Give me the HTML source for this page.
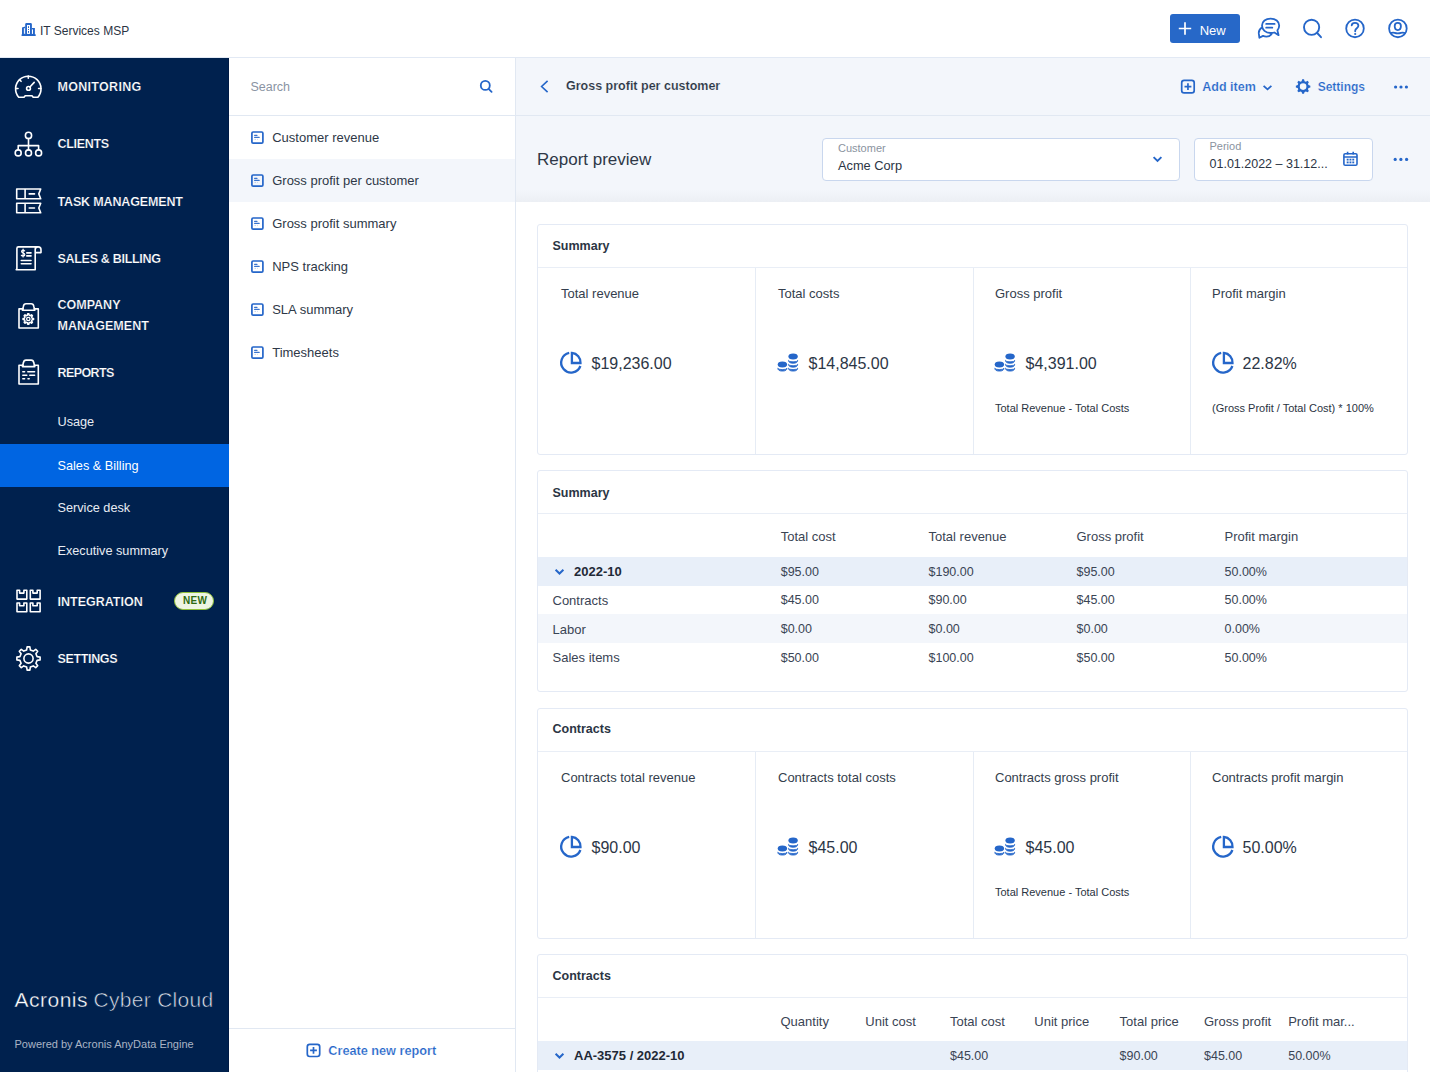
<!DOCTYPE html>
<html><head><meta charset="utf-8">
<style>
*{box-sizing:border-box;margin:0;padding:0}
html,body{width:1430px;height:1072px;overflow:hidden;background:#fff}
body{font-family:"Liberation Sans",sans-serif;color:#2c3646;position:relative}
.abs{position:absolute}
.t{position:absolute;line-height:1;white-space:nowrap}
svg.ov{position:absolute;left:0;top:0;width:1430px;height:1072px;pointer-events:none}
</style></head>
<body>
<div class="abs" style="left:0px;top:0px;width:1430px;height:57px;background:#fff"></div>
<div class="abs" style="left:0px;top:57px;width:1430px;height:1px;background:#e2e9f4"></div>
<div class="abs" style="left:0px;top:58px;width:229px;height:1014px;background:#00214e"></div>
<div class="abs" style="left:228px;top:58px;width:1px;height:1014px;background:#001a44"></div>
<div class="abs" style="left:0px;top:444px;width:229px;height:43px;background:#0065e2"></div>
<div class="abs" style="left:229px;top:58px;width:286px;height:1014px;background:#fff"></div>
<div class="abs" style="left:515px;top:58px;width:1px;height:1014px;background:#e1e8f2"></div>
<div class="abs" style="left:229px;top:115px;width:286px;height:1px;background:#e1e8f2"></div>
<div class="abs" style="left:229px;top:159px;width:286px;height:43px;background:#f3f6fb"></div>
<div class="abs" style="left:229px;top:1028px;width:286px;height:1px;background:#e1e8f2"></div>
<div class="abs" style="left:516px;top:58px;width:914px;height:57px;background:#f3f6fb"></div>
<div class="abs" style="left:516px;top:115px;width:914px;height:1px;background:#e1e8f2"></div>
<div class="abs" style="left:516px;top:116px;width:914px;height:86px;background:#f3f6fb"></div>
<div class="abs" style="left:516px;top:190px;width:914px;height:12px;background:linear-gradient(#f3f6fb,#eceff4)"></div>
<div class="abs" style="left:822px;top:138px;width:358px;height:43px;background:#fff;border:1px solid #c9d7ee;border-radius:4px"></div>
<div class="abs" style="left:1194px;top:138px;width:179px;height:43px;background:#fff;border:1px solid #c9d7ee;border-radius:4px"></div>
<div class="abs" style="left:537px;top:224px;width:871px;height:231px;background:#fff;border:1px solid #e4eaf5;border-radius:3px"></div>
<div class="abs" style="left:538px;top:267px;width:869px;height:1px;background:#e9eef6"></div>
<div class="abs" style="left:755px;top:268px;width:1px;height:186px;background:#e6ecf5"></div>
<div class="abs" style="left:973px;top:268px;width:1px;height:186px;background:#e6ecf5"></div>
<div class="abs" style="left:1190px;top:268px;width:1px;height:186px;background:#e6ecf5"></div>
<div class="abs" style="left:537px;top:470px;width:871px;height:222px;background:#fff;border:1px solid #e4eaf5;border-radius:3px"></div>
<div class="abs" style="left:538px;top:513px;width:869px;height:1px;background:#e9eef6"></div>
<div class="abs" style="left:538px;top:557px;width:869px;height:29px;background:#e8eff9"></div>
<div class="abs" style="left:538px;top:614px;width:869px;height:29px;background:#f3f6fb"></div>
<div class="abs" style="left:537px;top:708px;width:871px;height:231px;background:#fff;border:1px solid #e4eaf5;border-radius:3px"></div>
<div class="abs" style="left:538px;top:751px;width:869px;height:1px;background:#e9eef6"></div>
<div class="abs" style="left:755px;top:752px;width:1px;height:186px;background:#e6ecf5"></div>
<div class="abs" style="left:973px;top:752px;width:1px;height:186px;background:#e6ecf5"></div>
<div class="abs" style="left:1190px;top:752px;width:1px;height:186px;background:#e6ecf5"></div>
<div class="abs" style="left:537px;top:954px;width:871px;height:130px;background:#fff;border:1px solid #e4eaf5;border-radius:3px"></div>
<div class="abs" style="left:538px;top:997px;width:869px;height:1px;background:#e9eef6"></div>
<div class="abs" style="left:538px;top:1041px;width:869px;height:29px;background:#e8eff9"></div>
<div class="t" style="left:40.0px;top:24.6px;font-size:12px;font-weight:400;color:#2b3443;">IT Services MSP</div>
<div class="abs" style="left:1170px;top:14px;width:70px;height:29px;background:#2768c8;border-radius:3px"></div>
<div class="t" style="left:1199.7px;top:23.5px;font-size:13px;font-weight:400;color:#fff;">New</div>
<div class="t" style="left:57.5px;top:81.2px;font-size:12.5px;font-weight:700;color:#ffffff;letter-spacing:0.3px;-webkit-text-stroke:0.2px #00214e">MONITORING</div>
<div class="t" style="left:57.5px;top:137.8px;font-size:12.5px;font-weight:700;color:#ffffff;letter-spacing:-0.3px;-webkit-text-stroke:0.2px #00214e">CLIENTS</div>
<div class="t" style="left:57.5px;top:196.2px;font-size:12.5px;font-weight:700;color:#ffffff;letter-spacing:-0.15px;-webkit-text-stroke:0.2px #00214e">TASK MANAGEMENT</div>
<div class="t" style="left:57.5px;top:253.4px;font-size:12.5px;font-weight:700;color:#ffffff;letter-spacing:-0.3px;-webkit-text-stroke:0.2px #00214e">SALES &amp; BILLING</div>
<div class="t" style="left:57.5px;top:299.2px;font-size:12.5px;font-weight:700;color:#ffffff;letter-spacing:0px;-webkit-text-stroke:0.2px #00214e">COMPANY</div>
<div class="t" style="left:57.5px;top:319.8px;font-size:12.5px;font-weight:700;color:#ffffff;letter-spacing:0.05px;-webkit-text-stroke:0.2px #00214e">MANAGEMENT</div>
<div class="t" style="left:57.5px;top:366.9px;font-size:12.5px;font-weight:700;color:#ffffff;letter-spacing:-0.6px;-webkit-text-stroke:0.2px #00214e">REPORTS</div>
<div class="t" style="left:57.5px;top:415.8px;font-size:12.7px;font-weight:400;color:#e8ecf3;">Usage</div>
<div class="t" style="left:57.5px;top:459.5px;font-size:12.7px;font-weight:400;color:#fff;">Sales &amp; Billing</div>
<div class="t" style="left:57.5px;top:502.0px;font-size:12.7px;font-weight:400;color:#e8ecf3;">Service desk</div>
<div class="t" style="left:57.5px;top:545.0px;font-size:12.7px;font-weight:400;color:#e8ecf3;">Executive summary</div>
<div class="t" style="left:57.5px;top:595.9px;font-size:12.5px;font-weight:700;color:#ffffff;letter-spacing:0px;-webkit-text-stroke:0.2px #00214e">INTEGRATION</div>
<div class="t" style="left:57.5px;top:653.0px;font-size:12.5px;font-weight:700;color:#ffffff;letter-spacing:-0.35px;-webkit-text-stroke:0.2px #00214e">SETTINGS</div>
<div class="abs" style="left:174px;top:592px;width:40px;height:18px;background:#eef5e3;border:1.5px solid #8fbf3a;border-radius:9px"></div>
<div class="t" style="left:183.0px;top:596.3px;font-size:10px;font-weight:700;color:#2f6a12;letter-spacing:0.3px">NEW</div>
<div class="t" style="left:14.5px;top:989.1px;font-size:21px;font-weight:400;color:#ffffff;letter-spacing:0.5px;-webkit-text-stroke:0.35px #00214e">Acronis</div>
<div class="t" style="left:93.5px;top:989.1px;font-size:21px;font-weight:400;color:#dfe4ec;letter-spacing:0.3px;-webkit-text-stroke:0.6px #00214e">Cyber Cloud</div>
<div class="t" style="left:14.5px;top:1039.2px;font-size:11px;font-weight:400;color:#aab4c5;">Powered by Acronis AnyData Engine</div>
<div class="t" style="left:250.4px;top:81.1px;font-size:12.5px;font-weight:400;color:#8a94a3;">Search</div>
<div class="t" style="left:272.2px;top:130.6px;font-size:13px;font-weight:400;color:#2e3847;">Customer revenue</div>
<div class="t" style="left:272.2px;top:173.6px;font-size:13px;font-weight:400;color:#2e3847;">Gross profit per customer</div>
<div class="t" style="left:272.2px;top:216.6px;font-size:13px;font-weight:400;color:#2e3847;">Gross profit summary</div>
<div class="t" style="left:272.2px;top:259.6px;font-size:13px;font-weight:400;color:#2e3847;">NPS tracking</div>
<div class="t" style="left:272.2px;top:302.6px;font-size:13px;font-weight:400;color:#2e3847;">SLA summary</div>
<div class="t" style="left:272.2px;top:345.6px;font-size:13px;font-weight:400;color:#2e3847;">Timesheets</div>
<div class="t" style="left:328.3px;top:1045.4px;font-size:12.7px;font-weight:700;color:#2566c9;-webkit-text-stroke:0.2px #fff">Create new report</div>
<div class="t" style="left:566.0px;top:80.4px;font-size:12.5px;font-weight:700;color:#2b3544;-webkit-text-stroke:0.15px #f3f6fb">Gross profit per customer</div>
<div class="t" style="left:1202.3px;top:80.9px;font-size:12.5px;font-weight:700;color:#2566c9;-webkit-text-stroke:0.2px #f3f6fb">Add item</div>
<div class="t" style="left:1317.7px;top:80.8px;font-size:12px;font-weight:700;color:#2566c9;-webkit-text-stroke:0.2px #f3f6fb">Settings</div>
<div class="t" style="left:537.0px;top:150.8px;font-size:17px;font-weight:400;color:#2e3847;">Report preview</div>
<div class="t" style="left:838.0px;top:142.7px;font-size:11px;font-weight:400;color:#8a93a0;">Customer</div>
<div class="t" style="left:838.0px;top:160.2px;font-size:12.8px;font-weight:400;color:#2b3544;">Acme Corp</div>
<div class="t" style="left:1209.5px;top:140.7px;font-size:11px;font-weight:400;color:#8a93a0;">Period</div>
<div class="t" style="left:1209.5px;top:158.2px;font-size:12.5px;font-weight:400;color:#2b3544;">01.01.2022 – 31.12...</div>
<div class="t" style="left:552.5px;top:239.7px;font-size:12.5px;font-weight:700;color:#2b3544;">Summary</div>
<div class="t" style="left:561.0px;top:286.6px;font-size:13px;font-weight:400;color:#343e4d;">Total revenue</div>
<div class="t" style="left:591.5px;top:356.3px;font-size:16px;font-weight:400;color:#2c3646;">$19,236.00</div>
<div class="t" style="left:778.0px;top:286.6px;font-size:13px;font-weight:400;color:#343e4d;">Total costs</div>
<div class="t" style="left:808.5px;top:356.3px;font-size:16px;font-weight:400;color:#2c3646;">$14,845.00</div>
<div class="t" style="left:995.0px;top:286.6px;font-size:13px;font-weight:400;color:#343e4d;">Gross profit</div>
<div class="t" style="left:1025.5px;top:356.3px;font-size:16px;font-weight:400;color:#2c3646;">$4,391.00</div>
<div class="t" style="left:995.0px;top:402.5px;font-size:11px;font-weight:400;color:#2a3342;">Total Revenue - Total Costs</div>
<div class="t" style="left:1212.0px;top:286.6px;font-size:13px;font-weight:400;color:#343e4d;">Profit margin</div>
<div class="t" style="left:1242.5px;top:356.3px;font-size:16px;font-weight:400;color:#2c3646;">22.82%</div>
<div class="t" style="left:1212.0px;top:402.5px;font-size:11px;font-weight:400;color:#2a3342;">(Gross Profit / Total Cost) * 100%</div>
<div class="t" style="left:552.5px;top:486.6px;font-size:12.5px;font-weight:700;color:#2b3544;">Summary</div>
<div class="t" style="left:780.7px;top:529.6px;font-size:13px;font-weight:400;color:#3a4454;">Total cost</div>
<div class="t" style="left:928.5px;top:529.6px;font-size:13px;font-weight:400;color:#3a4454;">Total revenue</div>
<div class="t" style="left:1076.5px;top:529.6px;font-size:13px;font-weight:400;color:#3a4454;">Gross profit</div>
<div class="t" style="left:1224.5px;top:529.6px;font-size:13px;font-weight:400;color:#3a4454;">Profit margin</div>
<div class="t" style="left:574.0px;top:565.3px;font-size:13px;font-weight:700;color:#1f2937;">2022-10</div>
<div class="t" style="left:780.7px;top:565.7px;font-size:12.5px;font-weight:400;color:#3a4454;">$95.00</div>
<div class="t" style="left:928.5px;top:565.7px;font-size:12.5px;font-weight:400;color:#3a4454;">$190.00</div>
<div class="t" style="left:1076.5px;top:565.7px;font-size:12.5px;font-weight:400;color:#3a4454;">$95.00</div>
<div class="t" style="left:1224.5px;top:565.7px;font-size:12.5px;font-weight:400;color:#3a4454;">50.00%</div>
<div class="t" style="left:552.5px;top:594.0px;font-size:13px;font-weight:400;color:#3a4454;">Contracts</div>
<div class="t" style="left:780.7px;top:594.4px;font-size:12.5px;font-weight:400;color:#3a4454;">$45.00</div>
<div class="t" style="left:928.5px;top:594.4px;font-size:12.5px;font-weight:400;color:#3a4454;">$90.00</div>
<div class="t" style="left:1076.5px;top:594.4px;font-size:12.5px;font-weight:400;color:#3a4454;">$45.00</div>
<div class="t" style="left:1224.5px;top:594.4px;font-size:12.5px;font-weight:400;color:#3a4454;">50.00%</div>
<div class="t" style="left:552.5px;top:622.7px;font-size:13px;font-weight:400;color:#3a4454;">Labor</div>
<div class="t" style="left:780.7px;top:623.1px;font-size:12.5px;font-weight:400;color:#3a4454;">$0.00</div>
<div class="t" style="left:928.5px;top:623.1px;font-size:12.5px;font-weight:400;color:#3a4454;">$0.00</div>
<div class="t" style="left:1076.5px;top:623.1px;font-size:12.5px;font-weight:400;color:#3a4454;">$0.00</div>
<div class="t" style="left:1224.5px;top:623.1px;font-size:12.5px;font-weight:400;color:#3a4454;">0.00%</div>
<div class="t" style="left:552.5px;top:651.4px;font-size:13px;font-weight:400;color:#3a4454;">Sales items</div>
<div class="t" style="left:780.7px;top:651.8px;font-size:12.5px;font-weight:400;color:#3a4454;">$50.00</div>
<div class="t" style="left:928.5px;top:651.8px;font-size:12.5px;font-weight:400;color:#3a4454;">$100.00</div>
<div class="t" style="left:1076.5px;top:651.8px;font-size:12.5px;font-weight:400;color:#3a4454;">$50.00</div>
<div class="t" style="left:1224.5px;top:651.8px;font-size:12.5px;font-weight:400;color:#3a4454;">50.00%</div>
<div class="t" style="left:552.5px;top:723.4px;font-size:12.5px;font-weight:700;color:#2b3544;">Contracts</div>
<div class="t" style="left:561.0px;top:770.6px;font-size:13px;font-weight:400;color:#343e4d;">Contracts total revenue</div>
<div class="t" style="left:591.5px;top:840.3px;font-size:16px;font-weight:400;color:#2c3646;">$90.00</div>
<div class="t" style="left:778.0px;top:770.6px;font-size:13px;font-weight:400;color:#343e4d;">Contracts total costs</div>
<div class="t" style="left:808.5px;top:840.3px;font-size:16px;font-weight:400;color:#2c3646;">$45.00</div>
<div class="t" style="left:995.0px;top:770.6px;font-size:13px;font-weight:400;color:#343e4d;">Contracts gross profit</div>
<div class="t" style="left:1025.5px;top:840.3px;font-size:16px;font-weight:400;color:#2c3646;">$45.00</div>
<div class="t" style="left:995.0px;top:886.5px;font-size:11px;font-weight:400;color:#2a3342;">Total Revenue - Total Costs</div>
<div class="t" style="left:1212.0px;top:770.6px;font-size:13px;font-weight:400;color:#343e4d;">Contracts profit margin</div>
<div class="t" style="left:1242.5px;top:840.3px;font-size:16px;font-weight:400;color:#2c3646;">50.00%</div>
<div class="t" style="left:552.5px;top:969.7px;font-size:12.5px;font-weight:700;color:#2b3544;">Contracts</div>
<div class="t" style="left:780.5px;top:1014.5px;font-size:13px;font-weight:400;color:#3a4454;">Quantity</div>
<div class="t" style="left:865.3px;top:1014.5px;font-size:13px;font-weight:400;color:#3a4454;">Unit cost</div>
<div class="t" style="left:950.0px;top:1014.5px;font-size:13px;font-weight:400;color:#3a4454;">Total cost</div>
<div class="t" style="left:1034.3px;top:1014.5px;font-size:13px;font-weight:400;color:#3a4454;">Unit price</div>
<div class="t" style="left:1119.6px;top:1014.5px;font-size:13px;font-weight:400;color:#3a4454;">Total price</div>
<div class="t" style="left:1204.0px;top:1014.5px;font-size:13px;font-weight:400;color:#3a4454;">Gross profit</div>
<div class="t" style="left:1288.2px;top:1014.5px;font-size:13px;font-weight:400;color:#3a4454;">Profit mar...</div>
<div class="t" style="left:574.0px;top:1049.3px;font-size:13px;font-weight:700;color:#1f2937;">AA-3575 / 2022-10</div>
<div class="t" style="left:950.0px;top:1049.7px;font-size:12.5px;font-weight:400;color:#3a4454;">$45.00</div>
<div class="t" style="left:1119.6px;top:1049.7px;font-size:12.5px;font-weight:400;color:#3a4454;">$90.00</div>
<div class="t" style="left:1204.0px;top:1049.7px;font-size:12.5px;font-weight:400;color:#3a4454;">$45.00</div>
<div class="t" style="left:1288.2px;top:1049.7px;font-size:12.5px;font-weight:400;color:#3a4454;">50.00%</div>
<svg class="ov" viewBox="0 0 1430 1072"><g fill="#2566c9"><path d="M22 27.6 L25.3 26.6 V35 H22 Z"/><path d="M25.2 24.4 Q25.2 23.1 26.5 23.1 H30.6 Q31.9 23.1 31.9 24.4 V35 H25.2 Z"/><path d="M31.8 28 H34.9 V35 H31.8 Z"/><rect x="21.4" y="34.2" width="14.5" height="1.8" rx="0.8"/></g><g fill="#fff"><rect x="23.9" y="28.2" width="1.0" height="5.6"/><rect x="27" y="25" width="3" height="8.9"/><rect x="32.0" y="29.4" width="1.0" height="4.5"/></g><g fill="#2566c9"><rect x="28" y="26.2" width="1" height="1.8"/><rect x="28" y="29" width="1" height="1"/><rect x="28" y="31" width="1" height="1.8"/></g><path d="M1185 22.2 V34.8 M1178.8 28.5 H1191.2" stroke="#fff" stroke-width="1.7" fill="none"/><g fill="none" stroke="#2566c9" stroke-width="1.8" stroke-linejoin="round" stroke-linecap="round"><path d="M1274.4 32.5 Q1272.6 33 1270.6 33 C1265.6 33 1262 29.6 1262 25.6 C1262 21.4 1265.7 18.6 1270.6 18.6 C1275.5 18.6 1279.2 21.4 1279.2 25.6 C1279.2 27.4 1278.6 29 1277.4 30.4 L1278.6 35.2 Z"/><path d="M1261.9 27.6 C1259.8 29 1258.6 31 1258.8 33.4 L1259.4 37.8 L1263 35.9 Q1264.5 36.6 1266.5 36.6 C1268.8 36.6 1270.4 35.6 1271.6 34"/><path d="M1266.2 23.9 H1274.6 M1266.2 27.7 H1272.3"/></g><g fill="none" stroke="#2566c9" stroke-width="1.9" stroke-linecap="round"><circle cx="1311.6" cy="27.3" r="7.6"/><path d="M1317.2 33 L1321 37.2"/></g><g fill="none" stroke="#2566c9" stroke-width="1.8" stroke-linecap="round"><circle cx="1355" cy="28.45" r="8.8"/><path d="M1351.7 25.3 C1351.9 23.6 1353.3 22.9 1355 22.9 C1357 22.9 1358.4 24.1 1358.4 25.8 C1358.4 28.2 1355.2 28.3 1355.2 30.8 V31.3"/></g><circle cx="1355.2" cy="34" r="1.1" fill="#2566c9"/><g fill="none" stroke="#2566c9" stroke-width="1.8"><circle cx="1397.9" cy="28.45" r="8.8"/><path d="M1397.8 22.9 C1399.9 22.9 1400.9 24.3 1400.9 26.1 C1400.9 28.5 1399.6 30.1 1397.8 30.1 C1396 30.1 1394.7 28.5 1394.7 26.1 C1394.7 24.3 1395.7 22.9 1397.8 22.9 Z"/><path d="M1389.9 33.3 C1391.6 32.6 1393 32.4 1394.6 32.8 C1396.6 33.4 1399 33.4 1401 32.8 C1402.6 32.4 1404 32.6 1405.8 33.3"/></g><g fill="none" stroke="#fff" stroke-width="1.6" stroke-linejoin="round" stroke-linecap="round"><path d="M18.7 97.2 H24 L25.2 95.7 H32 L33.2 97.2 H37.9 A12.7 12.7 0 1 0 18.7 97.2 Z"/><path d="M28.3 76 V78.3 M19.5 79.7 L21.1 81.3 M15.8 88.5 H18 M40.8 88.5 H38.6"/><circle cx="28.5" cy="88.4" r="1.9"/><path d="M29.9 87 L34.2 82.4"/></g><g fill="none" stroke="#fff" stroke-width="1.6" stroke-linejoin="round" stroke-linecap="round"><circle cx="28.5" cy="135.4" r="3.1"/><path d="M28.5 138.5 V145.6 M18.2 149.8 V145.6 H38.6 V149.8 M28.5 145.6 V149.8"/><circle cx="18.2" cy="152.9" r="3.0"/><circle cx="28.5" cy="152.9" r="3.0"/><circle cx="38.6" cy="152.9" r="3.0"/></g><g fill="none" stroke="#fff" stroke-width="1.6" stroke-linejoin="round" stroke-linecap="round"><path d="M16.7 189 H40.7 L38.8 193.9 L40.7 198.7 H16.7 Z M25.1 189 V198.7 M29.2 193.9 H34.5"/><path d="M16.7 203.3 H40.7 L38.8 208 L40.7 212.8 H16.7 Z M25.1 203.3 V212.8 M29.2 208 H34.5"/></g><g fill="none" stroke="#fff" stroke-width="1.6" stroke-linejoin="round" stroke-linecap="round"><path d="M35.2 252.6 V269.8 H16.2 L16.9 268.6 V248.4 Q16.9 246.9 18.4 246.9 H38.2 Q41 246.9 41 249.8 V252.6 H35.2 V249.4 Q35.2 246.9 38 246.9"/><path d="M26.8 252.9 H31 M26.8 255.9 H31 M21.3 260.5 H31 M21.3 263.8 H31"/><path d="M24.6 250.8 Q24 250.2 23.1 250.2 Q21.6 250.2 21.6 251.5 Q21.6 252.6 23.1 253 Q24.8 253.4 24.8 254.7 Q24.8 256 23.1 256 Q22 256 21.4 255.3 M23.1 249.2 V257" stroke-width="1.2"/></g><g fill="none" stroke="#fff" stroke-width="1.6" stroke-linejoin="round" stroke-linecap="round"><path d="M23.2 308.9 H19 V328 H38.3 V308.9 H34.2"/><path d="M22.4 310.2 L23.4 306.4 Q23.8 303.8 26 303.8 H31.2 Q33.4 303.8 33.8 306.4 L34.8 310.2 Z"/><path d="M32.11 318.18 L33.56 318.38 L33.56 319.62 L32.11 319.82 L31.58 321.12 L32.46 322.28 L31.58 323.16 L30.42 322.28 L29.12 322.81 L28.92 324.26 L27.68 324.26 L27.48 322.81 L26.18 322.28 L25.02 323.16 L24.14 322.28 L25.02 321.12 L24.49 319.82 L23.04 319.62 L23.04 318.38 L24.49 318.18 L25.02 316.88 L24.14 315.72 L25.02 314.84 L26.18 315.72 L27.48 315.19 L27.68 313.74 L28.92 313.74 L29.12 315.19 L30.42 315.72 L31.58 314.84 L32.46 315.72 L31.58 316.88 Z" stroke-width="1.5"/><circle cx="28.3" cy="319" r="1.7" stroke-width="1.3"/></g><g fill="none" stroke="#fff" stroke-width="1.6" stroke-linejoin="round" stroke-linecap="round"><path d="M23.2 365.3 H19 V384 H38.3 V365.3 H34.2"/><path d="M22.4 366.6 L23.4 362.8 Q23.8 360.1 26 360.1 H31.2 Q33.4 360.1 33.8 362.8 L34.8 366.6 Z"/><path d="M22.8 371.7 H24.6 M27.8 371.7 H34.6 M22.8 375.2 H26.8 M29.8 375.2 H34.6 M22.8 378.8 H24.6 M28 378.8 H29.2" stroke-width="1.5"/></g><g fill="none" stroke="#fff" stroke-width="1.6" stroke-linejoin="round" stroke-linecap="round" stroke-width="1.5" stroke-linejoin="miter"><path d="M17 590.3 H19.6 V593.0999999999999 H23.9 V590.3 H26.8 V599.0999999999999 H17 Z M30.3 590.3 H32.9 V593.0999999999999 H37.2 V590.3 H40.1 V599.0999999999999 H30.3 Z M17 603 H19.6 V605.8 H23.9 V603 H26.8 V611.8 H17 Z M30.3 603 H32.9 V605.8 H37.2 V603 H40.1 V611.8 H30.3 Z"/></g><g fill="none" stroke="#fff" stroke-width="1.6" stroke-linejoin="round" stroke-linecap="round"><path d="M26.65 649.90 L27.12 646.88 L29.88 646.88 L30.35 649.90 L33.27 651.11 L35.74 649.31 L37.69 651.26 L35.89 653.73 L37.10 656.65 L40.12 657.12 L40.12 659.88 L37.10 660.35 L35.89 663.27 L37.69 665.74 L35.74 667.69 L33.27 665.89 L30.35 667.10 L29.88 670.12 L27.12 670.12 L26.65 667.10 L23.73 665.89 L21.26 667.69 L19.31 665.74 L21.11 663.27 L19.90 660.35 L16.88 659.88 L16.88 657.12 L19.90 656.65 L21.11 653.73 L19.31 651.26 L21.26 649.31 L23.73 651.11 Z"/><circle cx="28.5" cy="658.5" r="4.6"/></g><g fill="none" stroke="#2566c9" stroke-width="1.7"><rect x="251.9" y="132" width="11" height="11.1" rx="1.2"/></g><g stroke="#2566c9" stroke-width="1.1" stroke-linecap="round" opacity="0.9"><path d="M254.6 135.4 H257 M254.6 137.4 H259.2"/></g><g stroke="#2566c9" stroke-width="1" opacity="0.35"><path d="M254.6 139.4 H255.8 M257.4 139.4 H258"/></g><g fill="none" stroke="#2566c9" stroke-width="1.7"><rect x="251.9" y="175" width="11" height="11.1" rx="1.2"/></g><g stroke="#2566c9" stroke-width="1.1" stroke-linecap="round" opacity="0.9"><path d="M254.6 178.4 H257 M254.6 180.4 H259.2"/></g><g stroke="#2566c9" stroke-width="1" opacity="0.35"><path d="M254.6 182.4 H255.8 M257.4 182.4 H258"/></g><g fill="none" stroke="#2566c9" stroke-width="1.7"><rect x="251.9" y="218" width="11" height="11.1" rx="1.2"/></g><g stroke="#2566c9" stroke-width="1.1" stroke-linecap="round" opacity="0.9"><path d="M254.6 221.4 H257 M254.6 223.4 H259.2"/></g><g stroke="#2566c9" stroke-width="1" opacity="0.35"><path d="M254.6 225.4 H255.8 M257.4 225.4 H258"/></g><g fill="none" stroke="#2566c9" stroke-width="1.7"><rect x="251.9" y="261" width="11" height="11.1" rx="1.2"/></g><g stroke="#2566c9" stroke-width="1.1" stroke-linecap="round" opacity="0.9"><path d="M254.6 264.4 H257 M254.6 266.4 H259.2"/></g><g stroke="#2566c9" stroke-width="1" opacity="0.35"><path d="M254.6 268.4 H255.8 M257.4 268.4 H258"/></g><g fill="none" stroke="#2566c9" stroke-width="1.7"><rect x="251.9" y="304" width="11" height="11.1" rx="1.2"/></g><g stroke="#2566c9" stroke-width="1.1" stroke-linecap="round" opacity="0.9"><path d="M254.6 307.4 H257 M254.6 309.4 H259.2"/></g><g stroke="#2566c9" stroke-width="1" opacity="0.35"><path d="M254.6 311.4 H255.8 M257.4 311.4 H258"/></g><g fill="none" stroke="#2566c9" stroke-width="1.7"><rect x="251.9" y="347" width="11" height="11.1" rx="1.2"/></g><g stroke="#2566c9" stroke-width="1.1" stroke-linecap="round" opacity="0.9"><path d="M254.6 350.4 H257 M254.6 352.4 H259.2"/></g><g stroke="#2566c9" stroke-width="1" opacity="0.35"><path d="M254.6 354.4 H255.8 M257.4 354.4 H258"/></g><g fill="none" stroke="#2566c9" stroke-width="1.8" stroke-linecap="round"><circle cx="485.3" cy="85.4" r="4.5"/><path d="M488.6 88.8 L491.6 91.8"/></g><g fill="none" stroke="#2566c9" stroke-width="1.7"><rect x="307.3" y="1044.3" width="12.4" height="12.2" rx="2.4"/><path d="M313.5 1047 V1053.8 M310.1 1050.4 H316.9"/></g><path d="M547.6 80.8 L541.6 86.5 L547.6 92.2" fill="none" stroke="#2566c9" stroke-width="1.6"/><g fill="none" stroke="#2566c9" stroke-width="1.7"><rect x="1181.7" y="80.4" width="12.5" height="12.4" rx="2.4"/><path d="M1187.95 83.2 V90 M1184.5 86.6 H1191.4"/></g><path d="M1263.6 85.8 L1267.5 89.3 L1271.4 85.8" fill="none" stroke="#2566c9" stroke-width="1.8"/><path fill="#2566c9" fill-rule="evenodd" d="M1301.62 81.20 L1302.19 79.36 L1304.01 79.36 L1304.58 81.20 L1305.87 81.74 L1307.57 80.83 L1308.87 82.13 L1307.96 83.83 L1308.50 85.12 L1310.34 85.69 L1310.34 87.51 L1308.50 88.08 L1307.96 89.37 L1308.87 91.07 L1307.57 92.37 L1305.87 91.46 L1304.58 92.00 L1304.01 93.84 L1302.19 93.84 L1301.62 92.00 L1300.33 91.46 L1298.63 92.37 L1297.33 91.07 L1298.24 89.37 L1297.70 88.08 L1295.86 87.51 L1295.86 85.69 L1297.70 85.12 L1298.24 83.83 L1297.33 82.13 L1298.63 80.83 L1300.33 81.74 Z M1306.4 86.6 A3.3 3.3 0 1 0 1299.8 86.6 A3.3 3.3 0 1 0 1306.4 86.6 Z"/><g fill="#2566c9"><circle cx="1395.6" cy="87" r="1.6"/><circle cx="1401" cy="87" r="1.6"/><circle cx="1406.4" cy="87" r="1.6"/></g><path d="M1153.6 157.1 L1157.5 160.9 L1161.4 157.1" fill="none" stroke="#2566c9" stroke-width="1.9"/><g fill="none" stroke="#2566c9" stroke-width="1.6"><rect x="1343.9" y="153.8" width="13.1" height="11.4" rx="1.3"/><path d="M1343.9 157 H1357 M1347.6 151.8 V154.6 M1353.2 151.8 V154.6"/></g><g fill="#2566c9"><rect x="1346.6999999999998" y="158.7" width="1.9" height="1.8"/><rect x="1346.6999999999998" y="161.5" width="1.9" height="1.8"/><rect x="1349.5" y="158.7" width="1.9" height="1.8"/><rect x="1349.5" y="161.5" width="1.9" height="1.8"/><rect x="1352.3" y="158.7" width="1.9" height="1.8"/><rect x="1352.3" y="161.5" width="1.9" height="1.8"/></g><g fill="#2566c9"><circle cx="1395.2" cy="159.4" r="1.6"/><circle cx="1400.9" cy="159.4" r="1.6"/><circle cx="1406.6" cy="159.4" r="1.6"/></g><g fill="none" stroke="#2566c9" stroke-width="2.3" stroke-linejoin="miter"><path d="M569.2 352.9 A9.9 9.9 0 1 0 580.4 366.0"/><path d="M571.9 352.9 V363.0 H580.5 A9.5 9.5 0 0 0 571.9 352.9 Z"/></g><g fill="#2566c9"><ellipse cx="793.1" cy="356.5" rx="4.7" ry="3.0"/><ellipse cx="782.4" cy="364.5" rx="4.7" ry="3.0"/><path d="M788.5 360.3 A4.6 3.0 0 0 0 797.7 360.3 A4.6 1.5 0 0 1 788.5 360.3 Z" stroke="#2566c9" stroke-width="0.8" stroke-linejoin="round"/><path d="M788.5 364.2 A4.6 3.0 0 0 0 797.7 364.2 A4.6 1.5 0 0 1 788.5 364.2 Z" stroke="#2566c9" stroke-width="0.8" stroke-linejoin="round"/><path d="M788.5 368.1 A4.6 3.0 0 0 0 797.7 368.1 A4.6 1.5 0 0 1 788.5 368.1 Z" stroke="#2566c9" stroke-width="0.8" stroke-linejoin="round"/><path d="M777.8 368.1 A4.6 3.0 0 0 0 787.0 368.1 A4.6 1.5 0 0 1 777.8 368.1 Z" stroke="#2566c9" stroke-width="0.8" stroke-linejoin="round"/></g><g fill="#2566c9"><ellipse cx="1010.1" cy="356.5" rx="4.7" ry="3.0"/><ellipse cx="999.4" cy="364.5" rx="4.7" ry="3.0"/><path d="M1005.5 360.3 A4.6 3.0 0 0 0 1014.7 360.3 A4.6 1.5 0 0 1 1005.5 360.3 Z" stroke="#2566c9" stroke-width="0.8" stroke-linejoin="round"/><path d="M1005.5 364.2 A4.6 3.0 0 0 0 1014.7 364.2 A4.6 1.5 0 0 1 1005.5 364.2 Z" stroke="#2566c9" stroke-width="0.8" stroke-linejoin="round"/><path d="M1005.5 368.1 A4.6 3.0 0 0 0 1014.7 368.1 A4.6 1.5 0 0 1 1005.5 368.1 Z" stroke="#2566c9" stroke-width="0.8" stroke-linejoin="round"/><path d="M994.8 368.1 A4.6 3.0 0 0 0 1004.0 368.1 A4.6 1.5 0 0 1 994.8 368.1 Z" stroke="#2566c9" stroke-width="0.8" stroke-linejoin="round"/></g><g fill="none" stroke="#2566c9" stroke-width="2.3" stroke-linejoin="miter"><path d="M1221.2 352.9 A9.9 9.9 0 1 0 1232.4 366.0"/><path d="M1223.9 352.9 V363.0 H1232.5 A9.5 9.5 0 0 0 1223.9 352.9 Z"/></g><g fill="none" stroke="#2566c9" stroke-width="2.3" stroke-linejoin="miter"><path d="M569.2 836.9 A9.9 9.9 0 1 0 580.4 850.0"/><path d="M571.9 836.9 V847.0 H580.5 A9.5 9.5 0 0 0 571.9 836.9 Z"/></g><g fill="#2566c9"><ellipse cx="793.1" cy="840.5" rx="4.7" ry="3.0"/><ellipse cx="782.4" cy="848.5" rx="4.7" ry="3.0"/><path d="M788.5 844.3 A4.6 3.0 0 0 0 797.7 844.3 A4.6 1.5 0 0 1 788.5 844.3 Z" stroke="#2566c9" stroke-width="0.8" stroke-linejoin="round"/><path d="M788.5 848.2 A4.6 3.0 0 0 0 797.7 848.2 A4.6 1.5 0 0 1 788.5 848.2 Z" stroke="#2566c9" stroke-width="0.8" stroke-linejoin="round"/><path d="M788.5 852.1 A4.6 3.0 0 0 0 797.7 852.1 A4.6 1.5 0 0 1 788.5 852.1 Z" stroke="#2566c9" stroke-width="0.8" stroke-linejoin="round"/><path d="M777.8 852.1 A4.6 3.0 0 0 0 787.0 852.1 A4.6 1.5 0 0 1 777.8 852.1 Z" stroke="#2566c9" stroke-width="0.8" stroke-linejoin="round"/></g><g fill="#2566c9"><ellipse cx="1010.1" cy="840.5" rx="4.7" ry="3.0"/><ellipse cx="999.4" cy="848.5" rx="4.7" ry="3.0"/><path d="M1005.5 844.3 A4.6 3.0 0 0 0 1014.7 844.3 A4.6 1.5 0 0 1 1005.5 844.3 Z" stroke="#2566c9" stroke-width="0.8" stroke-linejoin="round"/><path d="M1005.5 848.2 A4.6 3.0 0 0 0 1014.7 848.2 A4.6 1.5 0 0 1 1005.5 848.2 Z" stroke="#2566c9" stroke-width="0.8" stroke-linejoin="round"/><path d="M1005.5 852.1 A4.6 3.0 0 0 0 1014.7 852.1 A4.6 1.5 0 0 1 1005.5 852.1 Z" stroke="#2566c9" stroke-width="0.8" stroke-linejoin="round"/><path d="M994.8 852.1 A4.6 3.0 0 0 0 1004.0 852.1 A4.6 1.5 0 0 1 994.8 852.1 Z" stroke="#2566c9" stroke-width="0.8" stroke-linejoin="round"/></g><g fill="none" stroke="#2566c9" stroke-width="2.3" stroke-linejoin="miter"><path d="M1221.2 836.9 A9.9 9.9 0 1 0 1232.4 850.0"/><path d="M1223.9 836.9 V847.0 H1232.5 A9.5 9.5 0 0 0 1223.9 836.9 Z"/></g><path d="M555.6 569.8 L559.5 573.5 L563.4 569.8" fill="none" stroke="#2566c9" stroke-width="2"/><path d="M555.6 1053.8 L559.5 1057.5 L563.4 1053.8" fill="none" stroke="#2566c9" stroke-width="2"/></svg>
</body></html>
